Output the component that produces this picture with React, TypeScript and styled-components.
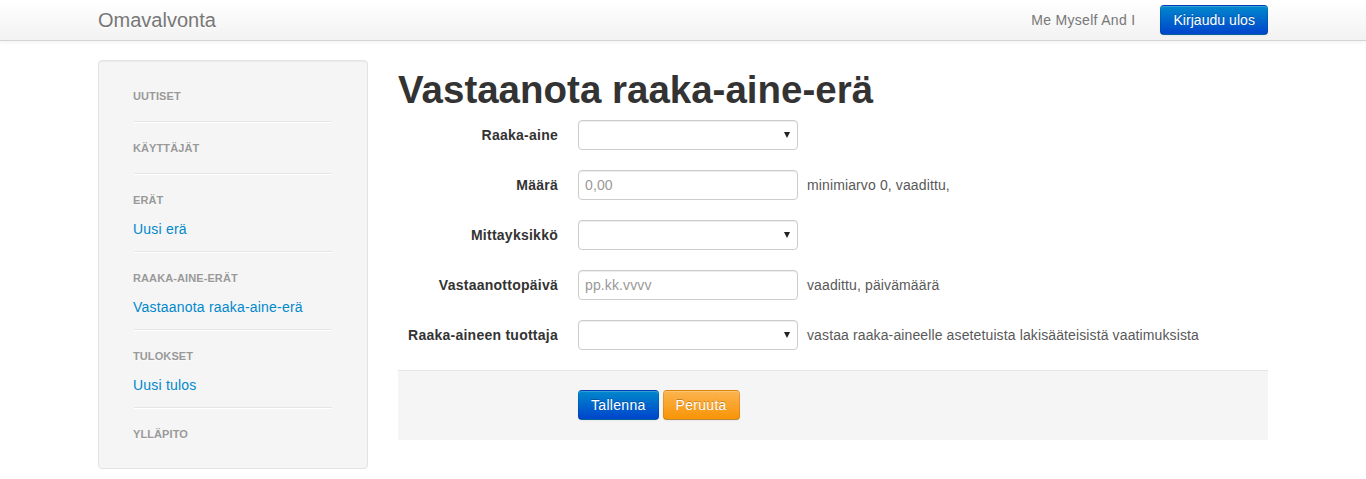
import React from 'react'
import styled, { createGlobalStyle, css } from 'styled-components'

const GlobalStyle = createGlobalStyle`
  html, body {
    margin: 0;
    padding: 0;
    background: #fff;
  }
  body {
    font-family: "Liberation Sans", Arial, Helvetica, sans-serif;
    font-size: 14px;
    line-height: 20px;
    letter-spacing: 0.12px;
    color: #333;
  }
  * {
    box-sizing: border-box;
  }
`

const Navbar = styled.div`
  height: 41px;
  background-image: linear-gradient(to bottom, #ffffff, #f2f2f2);
  border-bottom: 1px solid #d4d4d4;
  box-shadow: 0 1px 4px rgba(0, 0, 0, 0.065);
`

const Container = styled.div`
  width: 1170px;
  margin: 0 auto;
`

const NavbarInner = styled(Container)`
  height: 40px;
  display: flex;
  align-items: center;
  justify-content: space-between;
`

const Brand = styled.a`
  font-size: 20px;
  font-weight: 200;
  line-height: 20px;
  letter-spacing: 0;
  color: #777;
  text-shadow: 0 1px 0 #fff;
  text-decoration: none;
`

const NavRight = styled.div`
  display: flex;
  align-items: center;
`

const NavbarText = styled.span`
  color: #777;
  letter-spacing: 0.3px;
  margin-right: 25px;
`

const btnColors = {
  primary: ['#0088cc', '#0044cc'],
  warning: ['#fbb450', '#f89406']
}

const Button = styled.button<{ $kind: 'primary' | 'warning'; $tight?: boolean }>`
  display: inline-block;
  height: 30px;
  padding: 4px 12px;
  font-family: inherit;
  font-size: 14px;
  line-height: 20px;
  letter-spacing: ${({ $tight }) => ($tight ? '0.05px' : '0.3px')};
  color: #fff;
  text-shadow: 0 -1px 0 rgba(0, 0, 0, 0.25);
  border: 1px solid;
  border-color: rgba(0, 0, 0, 0.1) rgba(0, 0, 0, 0.1) rgba(0, 0, 0, 0.25);
  border-radius: 4px;
  box-shadow: inset 0 1px 0 rgba(255, 255, 255, 0.2), 0 1px 2px rgba(0, 0, 0, 0.05);
  cursor: pointer;
  ${({ $kind }) => css`
    background-color: ${btnColors[$kind][1]};
    background-image: linear-gradient(to bottom, ${btnColors[$kind][0]}, ${btnColors[$kind][1]});
  `}
`

const Main = styled(Container)`
  display: flex;
  gap: 30px;
  padding-top: 19px;
`

const Well = styled.div`
  width: 270px;
  flex: none;
  align-self: flex-start;
  padding: 22px 34px 21px;
  background: #f5f5f5;
  border: 1px solid #e3e3e3;
  border-radius: 4px;
  box-shadow: inset 0 1px 1px rgba(0, 0, 0, 0.05);
`

const NavList = styled.ul`
  list-style: none;
  margin: 0;
  padding: 0;
`

const NavHeader = styled.li`
  padding: 3px 0;
  font-size: 11px;
  font-weight: bold;
  line-height: 20px;
  letter-spacing: 0.1px;
  color: #999;
  text-shadow: 0 1px 0 rgba(255, 255, 255, 0.5);
  text-transform: uppercase;
`

const NavItem = styled.li`
  padding: 6px 0 0;
  line-height: 20px;
  letter-spacing: 0.2px;

  a {
    color: #0088cc;
    text-decoration: none;
  }
`

const Divider = styled.li`
  height: 2px;
  margin: 12px 1px;
  background: #e5e5e5;
  border-bottom: 1px solid #fff;
`

const Content = styled.div`
  width: 870px;
  flex: none;
`

const Title = styled.h1`
  margin: 10px 0;
  font-size: 38.5px;
  font-weight: bold;
  line-height: 40px;
  letter-spacing: 0;
  color: #333;
`

const ControlGroup = styled.div`
  display: flex;
  align-items: center;
  margin-bottom: 20px;
`

const ControlLabel = styled.label`
  width: 160px;
  flex: none;
  margin-right: 20px;
  text-align: right;
  font-weight: bold;
  letter-spacing: 0.25px;
`

const fieldBase = css`
  width: 220px;
  height: 30px;
  padding: 4px 6px;
  font-family: inherit;
  font-size: 14px;
  line-height: 20px;
  letter-spacing: 0.12px;
  color: #555;
  background: #fff;
  border: 1px solid #ccc;
  border-radius: 4px;
  box-shadow: inset 0 1px 1px rgba(0, 0, 0, 0.075);
`

const Input = styled.input`
  ${fieldBase}
  &::placeholder {
    color: #999;
  }
`

const SelectWrap = styled.div`
  position: relative;
  width: 220px;
  height: 30px;
`

const Select = styled.select`
  ${fieldBase}
  appearance: none;
  -webkit-appearance: none;
`

const Caret = styled.span`
  position: absolute;
  right: 8px;
  top: 12px;
  width: 0;
  height: 0;
  border-left: 3.5px solid transparent;
  border-right: 3.5px solid transparent;
  border-top: 6px solid #222;
  pointer-events: none;
`

const HelpInline = styled.span`
  margin-left: 9px;
  color: #595959;
`

const FormActions = styled.div`
  display: flex;
  gap: 4px;
  padding: 19px 20px 20px 180px;
  background: #f5f5f5;
  border-top: 1px solid #e5e5e5;
`

const sections: { header: string; links: string[] }[] = [
  { header: 'Uutiset', links: [] },
  { header: 'Käyttäjät', links: [] },
  { header: 'Erät', links: ['Uusi erä'] },
  { header: 'Raaka-aine-erät', links: ['Vastaanota raaka-aine-erä'] },
  { header: 'Tulokset', links: ['Uusi tulos'] },
  { header: 'Ylläpito', links: [] }
]

type Field = { label: string; type: 'select' | 'input'; placeholder?: string; help?: string }

const fields: Field[] = [
  { label: 'Raaka-aine', type: 'select' },
  { label: 'Määrä', type: 'input', placeholder: '0,00', help: 'minimiarvo 0, vaadittu,' },
  { label: 'Mittayksikkö', type: 'select' },
  { label: 'Vastaanottopäivä', type: 'input', placeholder: 'pp.kk.vvvv', help: 'vaadittu, päivämäärä' },
  {
    label: 'Raaka-aineen tuottaja',
    type: 'select',
    help: 'vastaa raaka-aineelle asetetuista lakisääteisistä vaatimuksista'
  }
]

const App = () => {
  return (
    <>
      <GlobalStyle />
      <Navbar>
        <NavbarInner>
          <Brand href="#">Omavalvonta</Brand>
          <NavRight>
            <NavbarText>Me Myself And I</NavbarText>
            <Button $kind="primary" $tight>
              Kirjaudu ulos
            </Button>
          </NavRight>
        </NavbarInner>
      </Navbar>
      <Main>
        <Well>
          <NavList>
            {sections.map((s, i) => (
              <React.Fragment key={s.header}>
                {i > 0 && <Divider />}
                <NavHeader>{s.header}</NavHeader>
                {s.links.map((l) => (
                  <NavItem key={l}>
                    <a href="#">{l}</a>
                  </NavItem>
                ))}
              </React.Fragment>
            ))}
          </NavList>
        </Well>
        <Content>
          <Title>Vastaanota raaka-aine-erä</Title>
          <form onSubmit={(e) => e.preventDefault()}>
            {fields.map((f) => (
              <ControlGroup key={f.label}>
                <ControlLabel>{f.label}</ControlLabel>
                {f.type === 'select' ? (
                  <SelectWrap>
                    <Select defaultValue="">
                      <option value=""></option>
                    </Select>
                    <Caret />
                  </SelectWrap>
                ) : (
                  <Input type="text" placeholder={f.placeholder} />
                )}
                {f.help && <HelpInline>{f.help}</HelpInline>}
              </ControlGroup>
            ))}
            <FormActions>
              <Button $kind="primary" type="submit">
                Tallenna
              </Button>
              <Button $kind="warning" type="button">
                Peruuta
              </Button>
            </FormActions>
          </form>
        </Content>
      </Main>
    </>
  )
}

export default App
